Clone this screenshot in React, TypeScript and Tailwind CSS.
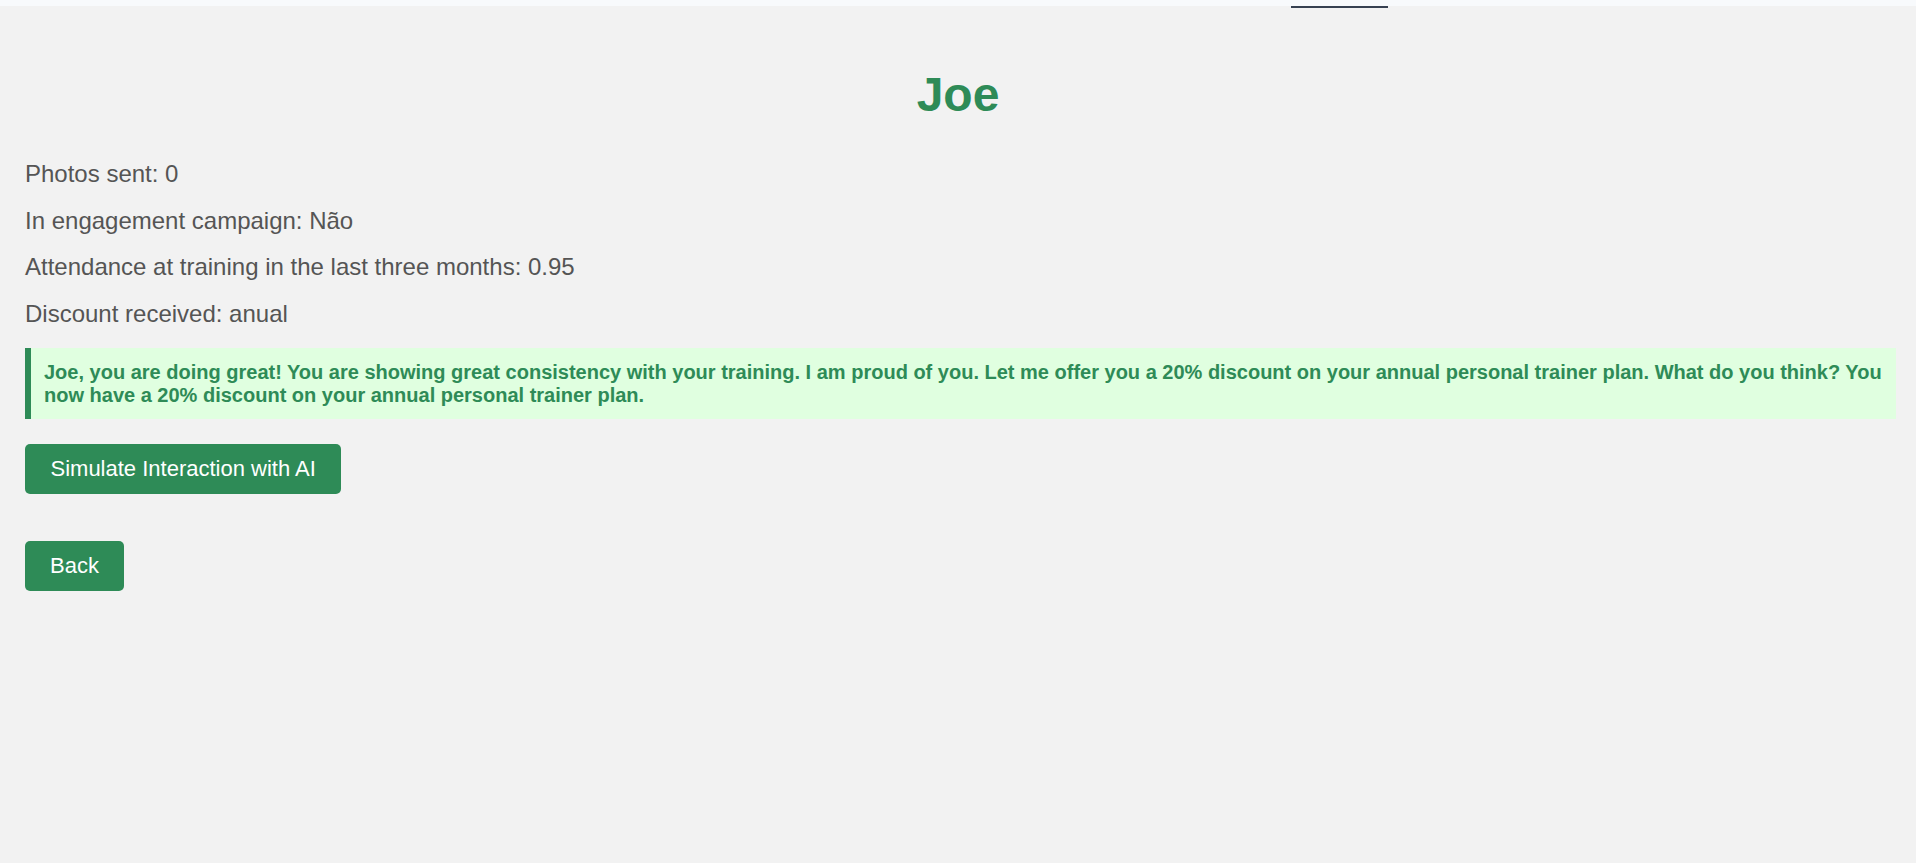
const stats = [
  "Photos sent: 0",
  "In engagement campaign: Não",
  "Attendance at training in the last three months: 0.95",
  "Discount received: anual",
];

const message =
  "Joe, you are doing great! You are showing great consistency with your training. I am proud of you. Let me offer you a 20% discount on your annual personal trainer plan. What do you think? You now have a 20% discount on your annual personal trainer plan.";

export default function App() {
  return (
    <div className="min-h-[863px] bg-[#f2f2f2] font-['Liberation_Sans',Arial,sans-serif]">
      {/* cut-off nav strip */}
      <div className="relative h-[6px] bg-[#f8fafc]">
        <div className="absolute left-[1291px] top-[6px] h-[2px] w-[97px] bg-[#374151]" />
      </div>

      <div className="px-[20px] pt-[61px]">
        <h1 className="text-center text-[48px] font-bold leading-[56px] text-[#2e8b57]">Joe</h1>

        <div className="pl-[5px]">
          <div className="mt-[28px]">
            {stats.map((s) => (
              <p key={s} className="text-[24px] leading-[46.7px] text-[#555555]">
                {s}
              </p>
            ))}
          </div>

          <div className="mt-[10px] border-l-[6px] border-[#2e8b57] bg-[#e0ffe0] pl-[13px] pr-[13px] pt-[13px] pb-[12px]">
            <p className="text-[20px] font-bold leading-[23px] text-[#2e8b57]">{message}</p>
          </div>

          <div className="mt-[25px] flex flex-col items-start gap-[46.7px]">
            <button
              type="button"
              className="rounded-[5px] bg-[#2e8b57] px-[25.5px] py-[12.5px] text-[22px] leading-[25.3px] text-white"
            >
              Simulate Interaction with AI
            </button>
            <button
              type="button"
              className="rounded-[5px] bg-[#2e8b57] px-[25px] py-[12.5px] text-[22px] leading-[25.3px] text-white"
            >
              Back
            </button>
          </div>
        </div>
      </div>
    </div>
  );
}
